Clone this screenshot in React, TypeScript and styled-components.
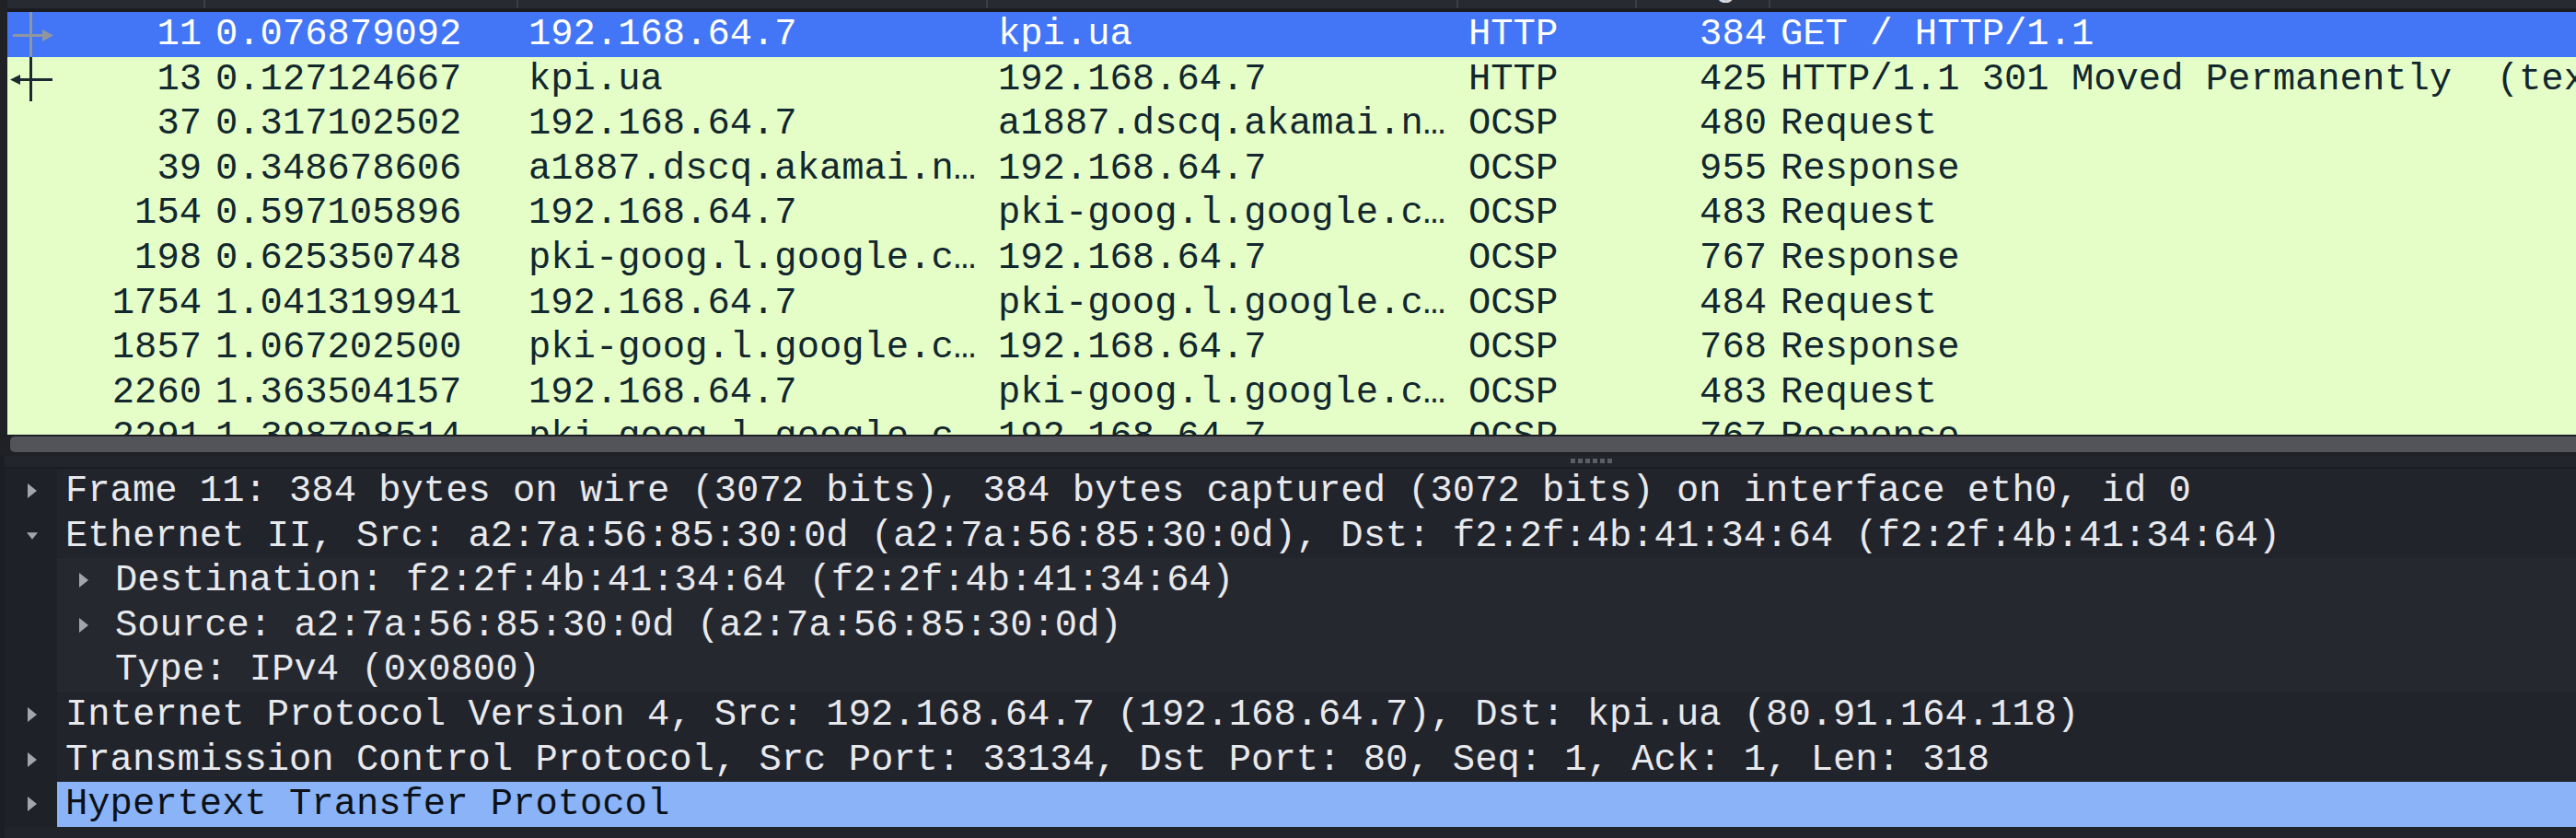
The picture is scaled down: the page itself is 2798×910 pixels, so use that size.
import React from 'react';
import styled, { createGlobalStyle } from 'styled-components';

const GlobalStyle = createGlobalStyle`
  *, *::before, *::after { box-sizing: border-box; }
  html, body { margin: 0; padding: 0; background: #1f2127; }
  body { width: 2798px; height: 910px; overflow: hidden; }
  #root { width: 2798px; height: 910px; }
`;

const MONO = `"Liberation Mono", "DejaVu Sans Mono", monospace`;
const ROW_H = 48.6;
const COLS = '215px 340px 510px 511px 194px 145px 1fr';

const Window = styled.div`
  width: 2798px;
  height: 910px;
  display: flex;
  flex-direction: column;
  overflow: hidden;
  background: #1f2127;
  font-family: ${MONO};
  font-size: 40.5px;
`;

/* ---------- packet list ---------- */

const PacketPane = styled.section`
  flex: none;
  height: 472px;
  display: flex;
  flex-direction: column;
  border-left: 8px solid #1f2127;
  overflow: hidden;
`;

const HeaderRow = styled.div`
  flex: none;
  display: grid;
  grid-template-columns: ${COLS};
  height: 13px;
  background: #272a31;
  border-bottom: 4px solid #1b1c21;
  overflow: hidden;
`;

const HeaderCell = styled.div<{ $right?: boolean; $last?: boolean }>`
  overflow: hidden;
  white-space: pre;
  padding: 0 4px 0 11px;
  text-align: ${(p) => (p.$right ? 'right' : 'left')};
  color: #d6d8dc;
  border-right: ${(p) => (p.$last ? 'none' : '2px solid #3b3e46')};
`;

const HeaderLabel = styled.span`
  display: block;
  line-height: 40.5px;
  margin-top: -36px;
`;

const RowList = styled.div`
  flex: 1;
  overflow: hidden;
`;

const PacketRow = styled.div<{ $selected?: boolean }>`
  display: grid;
  grid-template-columns: ${COLS};
  height: ${ROW_H}px;
  line-height: ${ROW_H}px;
  background: ${(p) => (p.$selected ? '#4276f6' : '#e5fec8')};
  color: ${(p) => (p.$selected ? '#ffffff' : '#12272e')};
`;

const Cell = styled.div<{ $right?: boolean }>`
  position: relative;
  overflow: hidden;
  white-space: pre;
  padding: 0 4px 0 11px;
  text-align: ${(p) => (p.$right ? 'right' : 'left')};
`;

const Indicator = styled.svg`
  position: absolute;
  left: 0;
  top: 0;
  width: 60px;
  height: 100%;
`;

/* ---------- scroll bar & splitter ---------- */

const HScroll = styled.div`
  flex: none;
  height: 23px;
  display: flex;
  border-top: 2px solid #1d1f24;
  border-bottom: 4px solid #1e2025;
  padding-left: 11px;
  background: #1f2127;
`;

const ScrollThumb = styled.div`
  flex: 1;
  background: #535459;
  border-radius: 5px 0 0 5px;
`;

const Splitter = styled.div`
  flex: none;
  height: 14px;
  display: flex;
  align-items: center;
  gap: 3px;
  padding-left: 1701px;
  padding-bottom: 2px;
  background: #23252d;
  border-left: 5px solid #1c1e23;
  border-bottom: 2px solid #1b1d22;
`;

const GripDot = styled.span`
  width: 5px;
  height: 5px;
  background: #5b5e65;
`;

/* ---------- detail tree ---------- */

const TreePane = styled.section`
  flex: 1;
  display: flex;
  flex-direction: column;
  background: #22242c;
  border-left: 5px solid #1c1e23;
  overflow: hidden;
`;

const TreeRow = styled.div`
  flex: none;
  display: flex;
  height: ${ROW_H}px;
  line-height: ${ROW_H}px;
`;

const Gutter = styled.div`
  flex: none;
  width: 57px;
  display: flex;
  align-items: center;
  padding-left: 24px;
  background: #1f2129;
`;

const Body = styled.div<{ $band?: boolean }>`
  flex: 1;
  display: flex;
  align-items: center;
  min-width: 0;
  background: ${(p) => (p.$band ? '#262830' : 'transparent')};
`;

const Indent = styled.div`
  flex: none;
  width: 54px;
  height: 100%;
  display: flex;
  align-items: center;
  padding-left: 23px;
`;

const ExpanderSlot = styled.span`
  flex: none;
  width: 12px;
  height: 18px;
  display: flex;
  align-items: center;
  justify-content: center;
`;

const Label = styled.div<{ $selected?: boolean }>`
  flex: 1;
  height: 100%;
  padding-left: 9px;
  white-space: pre;
  overflow: hidden;
  background: ${(p) => (p.$selected ? '#8ab4f7' : 'transparent')};
  color: ${(p) => (p.$selected ? '#0c1118' : '#e8e9ec')};
`;

/* ---------- data ---------- */

type Packet = {
  no: string;
  time: string;
  src: string;
  dst: string;
  proto: string;
  len: string;
  info: string;
  selected?: boolean;
  mark?: 'request' | 'response';
};

const packets: Packet[] = [
  { no: '11', time: '0.076879092', src: '192.168.64.7', dst: 'kpi.ua', proto: 'HTTP', len: '384', info: 'GET / HTTP/1.1', selected: true, mark: 'request' },
  { no: '13', time: '0.127124667', src: 'kpi.ua', dst: '192.168.64.7', proto: 'HTTP', len: '425', info: 'HTTP/1.1 301 Moved Permanently  (text/html)', mark: 'response' },
  { no: '37', time: '0.317102502', src: '192.168.64.7', dst: 'a1887.dscq.akamai.n\u2026', proto: 'OCSP', len: '480', info: 'Request' },
  { no: '39', time: '0.348678606', src: 'a1887.dscq.akamai.n\u2026', dst: '192.168.64.7', proto: 'OCSP', len: '955', info: 'Response' },
  { no: '154', time: '0.597105896', src: '192.168.64.7', dst: 'pki-goog.l.google.c\u2026', proto: 'OCSP', len: '483', info: 'Request' },
  { no: '198', time: '0.625350748', src: 'pki-goog.l.google.c\u2026', dst: '192.168.64.7', proto: 'OCSP', len: '767', info: 'Response' },
  { no: '1754', time: '1.041319941', src: '192.168.64.7', dst: 'pki-goog.l.google.c\u2026', proto: 'OCSP', len: '484', info: 'Request' },
  { no: '1857', time: '1.067202500', src: 'pki-goog.l.google.c\u2026', dst: '192.168.64.7', proto: 'OCSP', len: '768', info: 'Response' },
  { no: '2260', time: '1.363504157', src: '192.168.64.7', dst: 'pki-goog.l.google.c\u2026', proto: 'OCSP', len: '483', info: 'Request' },
  { no: '2291', time: '1.398708514', src: 'pki-goog.l.google.c\u2026', dst: '192.168.64.7', proto: 'OCSP', len: '767', info: 'Response' },
];

const headers: { label: string; right?: boolean }[] = [
  { label: 'No.', right: true },
  { label: 'Time' },
  { label: 'Source' },
  { label: 'Destination' },
  { label: 'Protocol' },
  { label: 'Length', right: true },
  { label: 'Info' },
];

type TreeItem = {
  level: 0 | 1;
  expander: 'closed' | 'open' | 'none';
  text: string;
  selected?: boolean;
  band?: boolean;
};

const tree: TreeItem[] = [
  { level: 0, expander: 'closed', text: 'Frame 11: 384 bytes on wire (3072 bits), 384 bytes captured (3072 bits) on interface eth0, id 0' },
  { level: 0, expander: 'open', text: 'Ethernet II, Src: a2:7a:56:85:30:0d (a2:7a:56:85:30:0d), Dst: f2:2f:4b:41:34:64 (f2:2f:4b:41:34:64)' },
  { level: 1, expander: 'closed', text: 'Destination: f2:2f:4b:41:34:64 (f2:2f:4b:41:34:64)', band: true },
  { level: 1, expander: 'closed', text: 'Source: a2:7a:56:85:30:0d (a2:7a:56:85:30:0d)', band: true },
  { level: 1, expander: 'none', text: 'Type: IPv4 (0x0800)', band: true },
  { level: 0, expander: 'closed', text: 'Internet Protocol Version 4, Src: 192.168.64.7 (192.168.64.7), Dst: kpi.ua (80.91.164.118)' },
  { level: 0, expander: 'closed', text: 'Transmission Control Protocol, Src Port: 33134, Dst Port: 80, Seq: 1, Ack: 1, Len: 318' },
  { level: 0, expander: 'closed', text: 'Hypertext Transfer Protocol', selected: true },
];

/* ---------- drawings ---------- */

function RelatedMark({ kind }: { kind: 'request' | 'response' }) {
  const color = kind === 'request' ? '#9096a0' : '#1b2a31';
  return (
    <Indicator viewBox={`0 0 60 ${ROW_H}`} preserveAspectRatio="none">
      <rect x={24} y={0} width={3} height={ROW_H} fill={color} />
      {kind === 'request' ? (
        <>
          <rect x={6} y={24} width={34} height={3} fill={color} />
          <polygon points="38,19 50,25.5 38,32" fill={color} />
        </>
      ) : (
        <>
          <rect x={12} y={23} width={37} height={3} fill={color} />
          <polygon points="3,24.5 14,19 14,30" fill={color} />
        </>
      )}
    </Indicator>
  );
}

function Expander({ state }: { state: 'closed' | 'open' }) {
  return state === 'closed' ? (
    <svg width="10" height="16" viewBox="0 0 10 16">
      <polygon points="0,0 10,8 0,16" fill="#a2a5ab" />
    </svg>
  ) : (
    <svg width="16" height="10" viewBox="0 0 16 10">
      <polygon points="0,0 16,0 8,10" fill="#a2a5ab" />
    </svg>
  );
}

/* ---------- app ---------- */

export default function App() {
  return (
    <>
      <GlobalStyle />
      <Window>
        <PacketPane>
          <HeaderRow>
            {headers.map((h, i) => (
              <HeaderCell key={h.label} $right={h.right} $last={i === headers.length - 1}>
                <HeaderLabel>{h.label}</HeaderLabel>
              </HeaderCell>
            ))}
          </HeaderRow>
          <RowList>
            {packets.map((p) => (
              <PacketRow key={p.no} $selected={p.selected}>
                <Cell $right>
                  {p.mark && <RelatedMark kind={p.mark} />}
                  {p.no}
                </Cell>
                <Cell>{p.time}</Cell>
                <Cell>{p.src}</Cell>
                <Cell>{p.dst}</Cell>
                <Cell>{p.proto}</Cell>
                <Cell $right>{p.len}</Cell>
                <Cell>{p.info}</Cell>
              </PacketRow>
            ))}
          </RowList>
        </PacketPane>

        <HScroll>
          <ScrollThumb />
        </HScroll>

        <Splitter>
          {Array.from({ length: 6 }).map((_, i) => (
            <GripDot key={i} />
          ))}
        </Splitter>

        <TreePane>
          {tree.map((t, i) => (
            <TreeRow key={i}>
              <Gutter>
                {t.level === 0 && t.expander !== 'none' && (
                  <ExpanderSlot>
                    <Expander state={t.expander} />
                  </ExpanderSlot>
                )}
              </Gutter>
              <Body $band={t.band}>
                {t.level === 1 && (
                  <Indent>
                    {t.expander !== 'none' && (
                      <ExpanderSlot>
                        <Expander state={t.expander} />
                      </ExpanderSlot>
                    )}
                  </Indent>
                )}
                <Label $selected={t.selected}>{t.text}</Label>
              </Body>
            </TreeRow>
          ))}
        </TreePane>
      </Window>
    </>
  );
}
